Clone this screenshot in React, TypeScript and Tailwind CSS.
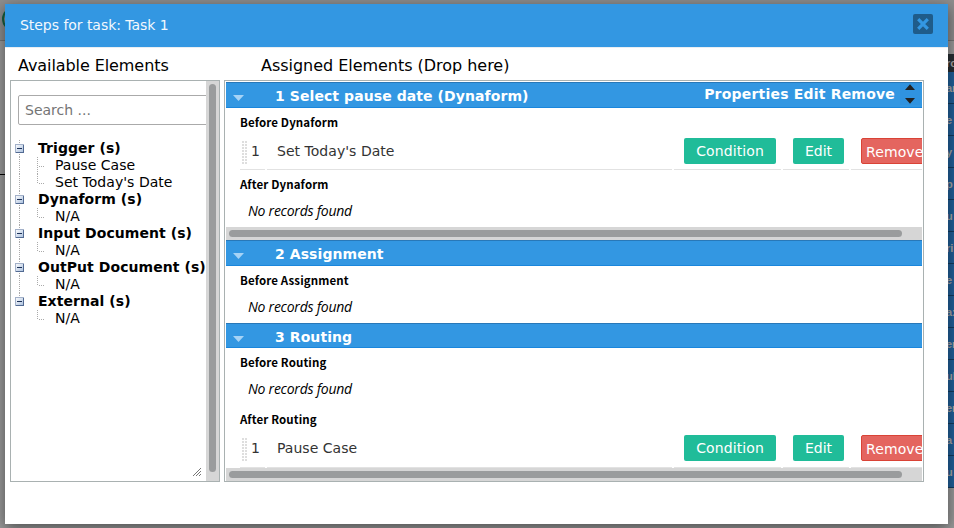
import React from "react";

const railRows = ["ar", "e", "y", "p", "u", "ri", "e", "a:", "er", "ul", "er", "a", "u"];

const tree = [
  { name: "Trigger (s)", items: ["Pause Case", "Set Today's Date"] },
  { name: "Dynaform (s)", items: ["N/A"] },
  { name: "Input Document (s)", items: ["N/A"] },
  { name: "OutPut Document (s)", items: ["N/A"] },
  { name: "External (s)", items: ["N/A"] },
];

function Backdrop() {
  return (
    <div className="flex h-full w-full flex-col">
      <div className="flex h-[41px] w-full shrink-0 items-center border-b border-[#747474] bg-[#8e8e8e]">
        <div className="-mt-0.5 ml-0.5 h-6 w-6 rounded-full border-2 border-[#17603f]" />
      </div>
      <div className="flex min-h-0 flex-1 justify-between">
        <div className="flex flex-col">
          <div className="h-[134px] w-5 border-b border-black" />
        </div>
        <div className="flex w-[14px] flex-col font-['Liberation_Sans',sans-serif] text-[11px] font-bold text-[#a8a8a8]">
          <div className="h-[13px] shrink-0" />
          <div className="flex h-[18px] shrink-0 items-center overflow-hidden bg-[#282e33] pl-[6px]">ro</div>
          {railRows.map((t, i) => (
            <div key={i} className="flex h-8 shrink-0 items-center overflow-hidden border-b border-[#103c60] bg-[#20609a] pl-[6px] pt-px">
              {t}
            </div>
          ))}
        </div>
      </div>
    </div>
  );
}

function Minus() {
  return (
    <svg width="9" height="9" viewBox="0 0 9 9" className="shrink-0" shapeRendering="crispEdges">
      <defs>
        <linearGradient id="node" x1="0" y1="0" x2="1" y2="1">
          <stop offset="0" stopColor="#ffffff" />
          <stop offset="1" stopColor="#a9bfdd" />
        </linearGradient>
      </defs>
      <rect x="0.5" y="0.5" width="8" height="8" fill="url(#node)" stroke="#a3b1c9" />
      <path d="M8.5 1V8.5H1" fill="none" stroke="#526a92" />
      <path d="M2 4.5H7" stroke="#1c3157" />
    </svg>
  );
}

function Branch({ last }: { last: boolean }) {
  return (
    <svg width="8" height="17" viewBox="0 0 8 17" className="shrink-0" shapeRendering="crispEdges">
      <path d={last ? "M0.5 0V10" : "M0.5 0V17"} stroke="#aaaaaa" strokeDasharray="1 1" />
      <path d="M2 9.5H7" stroke="#aaaaaa" strokeDasharray="1 1" />
    </svg>
  );
}

function Trunk({ to }: { to: number }) {
  return (
    <svg width="1" height="17" viewBox="0 0 1 17" className="shrink-0" shapeRendering="crispEdges">
      <path d={`M0.5 0V${to}`} stroke="#aaaaaa" strokeDasharray="1 1" />
    </svg>
  );
}

function Tree() {
  return (
    <div className="mt-[15px] pl-[4px] text-[14px] leading-[17px] tracking-[0.03px] text-black">
      {tree.map((g, gi) => (
        <div key={g.name}>
          <div className="flex h-[17px] items-center">
            <div className="grid w-[9px] shrink-0 place-items-center">
              <div className="col-start-1 row-start-1 flex">
                <Trunk to={gi === tree.length - 1 ? 8 : 17} />
              </div>
              <div className="z-10 col-start-1 row-start-1 flex">
                <Minus />
              </div>
            </div>
            <span className="ml-[14px] whitespace-nowrap font-bold tracking-[0.06px]">{g.name}</span>
          </div>
          {g.items.map((item, i) => (
            <div key={item} className="flex h-[17px] items-center">
              <div className="ml-[4px] w-[18px] shrink-0">{gi < tree.length - 1 && <Trunk to={17} />}</div>
              <Branch last={i === g.items.length - 1} />
              <span className="ml-[10px] whitespace-nowrap">{item}</span>
            </div>
          ))}
        </div>
      ))}
    </div>
  );
}

function Band({ title, tall, actions }: { title: string; tall?: boolean; actions?: boolean }) {
  return (
    <div
      className={`flex shrink-0 items-start border-b border-t border-b-[#1a86dc] border-t-[#2878b8] bg-[#3397e2] text-[14px] font-bold text-white ${tall ? "h-[26px]" : "h-[25px]"}`}
    >
      <svg width="11" height="6" viewBox="0 0 11 6" className="ml-[7px] mt-[12px]">
        <path d="M0 0H11L5.5 6Z" fill="#a6d3f6" />
      </svg>
      <span className="ml-[31px] mt-[3px] whitespace-pre leading-[20px] tracking-[0.08px]">{title}</span>
      {actions && (
        <div className="ml-auto flex">
          <span className="mt-px leading-[20px] tracking-[0.2px]">Properties Edit Remove</span>
          <svg width="20" height="22" viewBox="0 0 20 22" className="ml-[5px] mr-[2px]">
            <rect width="20" height="22" fill="#3093df" />
            <path d="M5 7H15L10 1.2ZM5 15H15L10 20.8Z" fill="#222222" />
          </svg>
        </div>
      )}
    </div>
  );
}

function Label({ children }: { children: React.ReactNode }) {
  return (
    <div className="h-[18px] shrink-0 pl-[14px] font-['Noto_Sans_CJK_SC','Open_Sans',sans-serif] text-[11.5px] font-bold leading-[16px] tracking-[0.12px] text-black">
      {children}
    </div>
  );
}

function Empty() {
  return (
    <div className="h-[20px] shrink-0 pl-[22px] font-['Open_Sans',sans-serif] text-[14px] italic leading-[20px] tracking-[-0.25px] text-black">
      No records found
    </div>
  );
}

function Grip() {
  return (
    <svg width="5" height="23" viewBox="0 0 5 23" className="ml-[2px] mt-[3px]" shapeRendering="crispEdges">
      {[0, 3, 6, 9, 12, 15, 18, 21].map((y) => (
        <path key={y} d={`M0 ${y}h2v2h-2zM3 ${y}h2v2h-2z`} fill="#dedede" />
      ))}
    </svg>
  );
}

function Row({ name, extended }: { name: string; extended?: boolean }) {
  const cell = `flex items-start border-b border-[#e2e2e2] pt-[6px] leading-[26px] ${extended ? "h-[39px]" : "h-[38px]"}`;
  return (
    <div className="flex shrink-0 gap-[2px] overflow-hidden pl-[14px] text-[14px] text-[#333]">
      <div className={`${cell} w-[25px] shrink-0`}>
        <Grip />
        <span className="ml-[4px]">1</span>
      </div>
      <div className={`${cell} w-[405px] shrink-0 pl-[10px] tracking-[0.03px]`}>{name}</div>
      <div className={`${cell} w-[107px] shrink-0 pl-[10px]`}>
        <span className="flex h-[26px] w-[92px] items-center justify-center rounded-[2px] bg-[#20bc99] tracking-[0.1px] text-white">Condition</span>
      </div>
      <div className={`${cell} w-[66px] shrink-0 pl-[10px]`}>
        <span className="flex h-[26px] w-[51px] items-center justify-center rounded-[2px] bg-[#20bc99] text-white">Edit</span>
      </div>
      <div className={`${cell} w-[90px] shrink-0 pl-[10px]`}>
        <span className="flex h-[26px] w-[72px] shrink-0 items-center rounded-[2px] border border-[#d94336] bg-[#e4655f] pl-[4px] pt-[2px] tracking-[0.1px] text-white">Remove</span>
      </div>
    </div>
  );
}

function HScroll() {
  return (
    <div className="flex h-[13px] shrink-0 items-center bg-[#d6d6d6] pl-[3px]">
      <div className="h-[7px] w-[673px] rounded-full bg-[#9a9c9d]" />
    </div>
  );
}

export default function App() {
  return (
    <div className="relative h-[528px] w-[954px] overflow-hidden bg-[#9a9a9a] font-['DejaVu_Sans',sans-serif]">
      <Backdrop />
      <div className="absolute left-[5px] top-[4px] flex h-[520px] w-[943px] flex-col bg-white shadow-[0_4px_14px_rgba(0,0,0,0.5)]">
        <div className="flex h-[43px] shrink-0 items-center justify-between bg-[#3397e2] pl-[15px] pr-[15px] text-[14px] text-[#f2f8fd]">
          <span className="tracking-[-0.04px]">Steps for task: Task 1</span>
          <div className="-mt-[3px] flex h-5 w-5 items-center justify-center rounded-[2px] bg-[#1f5c8a]">
            <svg width="12" height="12" viewBox="0 0 12 12">
              <path d="M1.2 1.2L10.8 10.8M10.8 1.2L1.2 10.8" stroke="#3397e2" strokeWidth="3.2" />
            </svg>
          </div>
        </div>
        <div className="flex h-[33px] shrink-0 items-center border-t border-[#e8eef3] pt-[4px] text-[16px] text-black">
          <span className="w-[243px] pl-[13px] tracking-[-0.08px]">Available Elements</span>
          <span className="pl-[13px] tracking-[-0.03px]">Assigned Elements (Drop here)</span>
        </div>
        <div className="flex gap-[4px] pl-[5px]">
          <div className="flex h-[402px] w-[210px] border border-[#a9b1b1]">
            <div className="flex min-w-0 flex-1 flex-col overflow-hidden pl-[7px] pt-[14px]">
              <div className="flex h-[30px] w-[230px] shrink-0 items-center rounded-[2px] border border-[#aaaaaa] pl-[6px] text-[14px] text-[#757575]">
                Search ...
              </div>
              <div className="-ml-[7px]">
                <Tree />
              </div>
              <svg width="8" height="8" viewBox="0 0 8 8" className="mb-[5px] ml-auto mr-[5px] mt-auto">
                <path d="M0 8L8 0M3 8L8 3M6 8L8 6" stroke="#777777" strokeWidth="1" />
              </svg>
            </div>
            <div className="flex w-[13px] justify-center bg-[#d6d6d6] pt-[3px]">
              <div className="h-[388px] w-[7px] rounded-full bg-[#9a9c9d]" />
            </div>
          </div>
          <div className="flex h-[402px] w-[700px] flex-col overflow-hidden border border-[#a9b1b1] px-px pt-px">
            <Band title="1 Select pause date (Dynaform)" tall actions />
            <div className="flex h-[119px] shrink-0 flex-col pt-[6px]">
              <Label>Before Dynaform</Label>
              <Row name="Set Today's Date" />
              <div className="h-[6px] shrink-0" />
              <Label>After Dynaform</Label>
              <div className="h-[7px] shrink-0" />
              <Empty />
            </div>
            <HScroll />
            <Band title="2 Assignment" tall />
            <div className="flex h-[57px] shrink-0 flex-col pt-[6px]">
              <Label>Before Assignment</Label>
              <div className="h-[7px] shrink-0" />
              <Empty />
            </div>
            <Band title="3 Routing" />
            <div className="flex h-[120px] shrink-0 flex-col pt-[6px]">
              <Label>Before Routing</Label>
              <div className="h-[7px] shrink-0" />
              <Empty />
              <div className="h-[12px] shrink-0" />
              <Label>After Routing</Label>
              <Row name="Pause Case" extended />
            </div>
            <HScroll />
          </div>
        </div>
      </div>
    </div>
  );
}
